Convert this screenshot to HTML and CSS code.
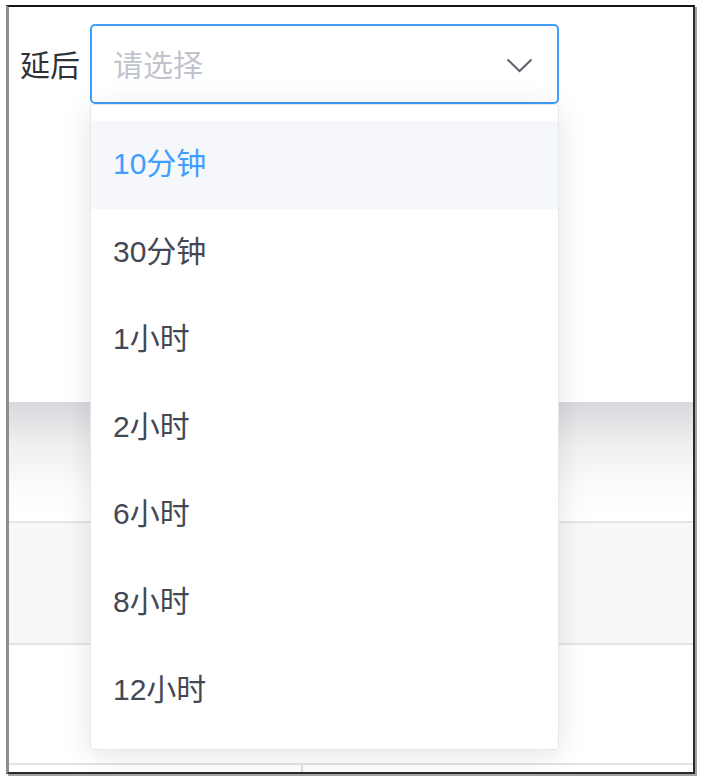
FILE: index.html
```html
<!DOCTYPE html>
<html lang="zh-CN">
<head>
<meta charset="UTF-8" />
<title>延后</title>
<link rel="stylesheet" href="styles.css">
</head>
<body>
  <div class="frame">
    <!-- Form row with open select -->
    <div class="form-row">
      <label class="label">延后</label>
      <div class="select is-focus">
        <span class="placeholder">请选择</span>
        <svg class="arrow" width="27" height="15" viewBox="0 0 27 15">
          <polyline points="1.5,1.5 13.5,13 25.5,1.5" fill="none" stroke="#5f6269" stroke-width="2" />
        </svg>

        <ul class="dropdown">
          <li class="option hover selected">10分钟</li>
          <li class="option">30分钟</li>
          <li class="option">1小时</li>
          <li class="option">2小时</li>
          <li class="option">6小时</li>
          <li class="option">8小时</li>
          <li class="option">12小时</li>
        </ul>
      </div>
    </div>

    <!-- Table behind the dropdown -->
    <div class="table">
      <div class="table-shade"></div>
      <div class="table-row striped"></div>
      <div class="table-row"></div>
      <div class="table-row last">
        <div class="cell first"></div>
        <div class="cell"></div>
      </div>
    </div>
  </div>
</body>
</html>
```

FILE: styles.css
```css
* {
  margin: 0;
  padding: 0;
  box-sizing: border-box;
}

html, body {
  height: 100%;
  background: #ffffff;
  font-family: "Liberation Sans", "Noto Sans CJK SC", sans-serif;
  overflow: hidden;
}

.frame {
  position: relative;
  margin: 5px 0 0 6px;
  width: 689px;
  height: 769px;
  border-top: 2px solid #151515;
  border-left: 3px solid #8e8e8e;
  border-right: 2px solid #2a2a2a;
  border-bottom: 2px solid #2a2a2a;
  box-shadow: 2px 2px 0 #a3a3a3;
  overflow: hidden;
  background: #ffffff;
}

/* Form row */
.form-row {
  display: flex;
  align-items: center;
  height: 80px;
  margin: 17px 0 0 11px;
  position: relative;
  z-index: 2;
}

.label {
  width: 70px;
  font-size: 30px;
  color: #2f3238;
  line-height: 40px;
  padding-top: 3px;
}

.select {
  position: relative;
  display: flex;
  align-items: center;
  width: 469px;
  height: 80px;
  border: 2px solid #409eff;
  border-radius: 5px;
  padding: 0 24px 0 21px;
}

.placeholder {
  flex: 1;
  font-size: 30px;
  line-height: 40px;
  color: #c0c4cc;
  padding-top: 3px;
}

.arrow {
  display: block;
  margin-top: 2px;
}

/* Dropdown */
.dropdown {
  position: absolute;
  top: 78px;
  left: -2px;
  width: 469px;
  height: 646px;
  list-style: none;
  background: #ffffff;
  border: 1px solid #e4e7ed;
  border-radius: 4px;
  padding: 16px 0 0;
  box-shadow: 0 5px 30px rgba(0, 0, 0, 0.11);
}

.option {
  height: 87.6px;
  line-height: 86px;
  padding: 0 22px;
  font-size: 30px;
  color: #434854;
}

.option.hover {
  background: #f5f7fa;
}

.option.selected {
  color: #409eff;
}

/* Table */
.table {
  margin-top: 298px;
  position: relative;
  z-index: 1;
}

.table-shade {
  height: 121px;
  border-bottom: 2px solid #e3e4e8;
  background: linear-gradient(#d8d9dc, #eeeff0 35%, #fbfbfb 70%, #ffffff);
}

.table-row {
  height: 122px;
  border-bottom: 2px solid #e3e4e8;
}

.table-row.striped {
  background: #f8f8f9;
}

.table-row + .table-row:not(.striped):not(.last) {
  height: 120px;
}

.table-row.last {
  display: flex;
  height: 20px;
  border-bottom: none;
}

.cell.first {
  width: 294px;
  border-right: 2px solid #dfe0e4;
}
```
